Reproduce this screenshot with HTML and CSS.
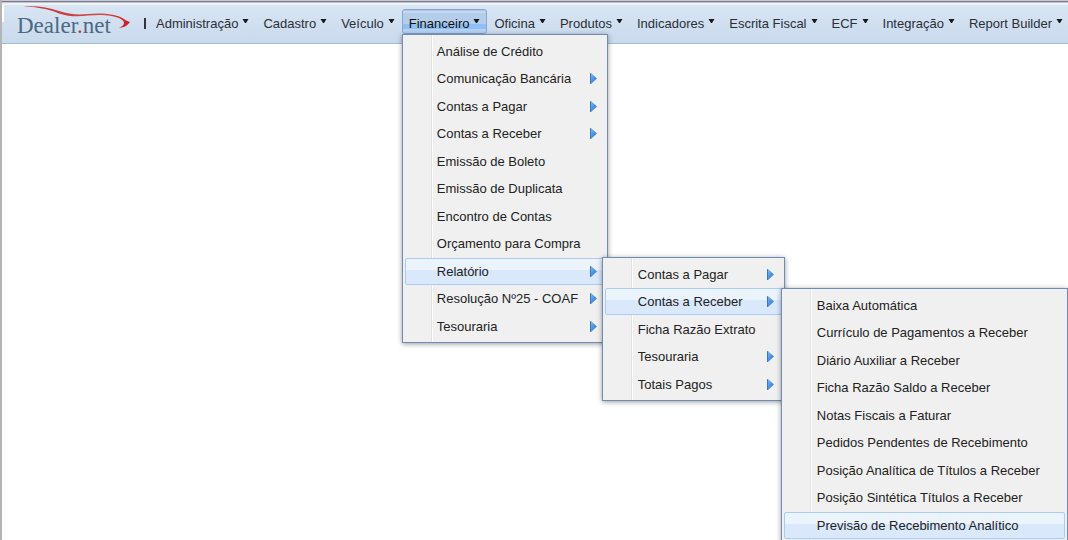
FILE: index.html
```html
<!DOCTYPE html>
<html lang="pt-BR">
<head>
<meta charset="utf-8">
<title>Dealer.net</title>
<link rel="stylesheet" href="styles.css">
</head>
<body>
<svg class="defs" width="0" height="0" aria-hidden="true">
  <defs>
    <linearGradient id="arrow-fill" x1="0" y1="0" x2="1" y2="1">
      <stop offset="0" stop-color="#8cc0f2"/>
      <stop offset="0.5" stop-color="#4f94e0"/>
      <stop offset="1" stop-color="#2f74c8"/>
    </linearGradient>
    <symbol id="arrow" viewBox="0 0 7 11">
      <path d="M0 0 H1 L7 5.500 L1 11 H0 Z" fill="url(#arrow-fill)"/>
      <path d="M0.5 0.3 V10.7" stroke="#3a76c0" stroke-width="1"/>
    </symbol>
    <symbol id="caret" viewBox="0 0 7 4">
      <path d="M0.500 0 H6.500 L4 4 H3 Z" fill="#15181d"/>
    </symbol>
  </defs>
</svg>
<div class="page">
  <header class="bar">
    <a class="brand" href="#" aria-label="Dealer.net">
      <svg width="130" height="36" viewBox="0 0 130 36">
        <defs>
          <linearGradient id="swoosh" x1="0" x2="1" y1="0" y2="0">
            <stop offset="0" stop-color="#d03a3a" stop-opacity="0.5"/>
            <stop offset="0.15" stop-color="#c8383a"/>
            <stop offset="0.75" stop-color="#d04a48"/>
            <stop offset="1" stop-color="#cc1c20"/>
          </linearGradient>
        </defs>
        <text class="brand-text" x="15" y="30">Dealer<tspan class="brand-dot">.</tspan>net</text>
        <path fill="url(#swoosh)" d="M21 3.500 C33 2 46 4.500 57 8 C67 11.200 75 12 86 11 C100 9.600 114 11 121 15.500 C122.500 16.500 123.500 17.300 128 19 C126 22 123 24.300 116.500 25.200 C120 23.500 122 22 122 20 C122 18 120 16.500 117 15 C109 11.600 98 11.400 86 12.600 C76 13.600 67 13.800 57 10.400 C46 6 35 3.800 21 3.500 Z"/>
      </svg>
    </a>
    <nav class="nav" aria-label="Principal">
      <span class="divider"></span>
      <button class="tab">Administração<svg class="caret"><use href="#caret"/></svg></button>
      <button class="tab">Cadastro<svg class="caret"><use href="#caret"/></svg></button>
      <button class="tab">Veículo<svg class="caret"><use href="#caret"/></svg></button>
      <div class="tab-group">
        <button class="tab tab-open" aria-expanded="true">Financeiro<svg class="caret"><use href="#caret"/></svg></button>
        <ul class="menu menu-main">
          <li><button class="item">Análise de Crédito</button></li>
          <li><button class="item">Comunicação Bancária<svg class="arrow"><use href="#arrow"/></svg></button></li>
          <li><button class="item">Contas a Pagar<svg class="arrow"><use href="#arrow"/></svg></button></li>
          <li><button class="item">Contas a Receber<svg class="arrow"><use href="#arrow"/></svg></button></li>
          <li><button class="item">Emissão de Boleto</button></li>
          <li><button class="item">Emissão de Duplicata</button></li>
          <li><button class="item">Encontro de Contas</button></li>
          <li><button class="item">Orçamento para Compra</button></li>
          <li>
            <button class="item item-active" aria-expanded="true">Relatório<svg class="arrow"><use href="#arrow"/></svg></button>
            <ul class="menu menu-sub">
              <li><button class="item">Contas a Pagar<svg class="arrow"><use href="#arrow"/></svg></button></li>
              <li>
                <button class="item item-active" aria-expanded="true">Contas a Receber<svg class="arrow"><use href="#arrow"/></svg></button>
                <ul class="menu menu-sub menu-wide">
                  <li><button class="item">Baixa Automática</button></li>
                  <li><button class="item">Currículo de Pagamentos a Receber</button></li>
                  <li><button class="item">Diário Auxiliar a Receber</button></li>
                  <li><button class="item">Ficha Razão Saldo a Receber</button></li>
                  <li><button class="item">Notas Fiscais a Faturar</button></li>
                  <li><button class="item">Pedidos Pendentes de Recebimento</button></li>
                  <li><button class="item">Posição Analítica de Títulos a Receber</button></li>
                  <li><button class="item">Posição Sintética Títulos a Receber</button></li>
                  <li><button class="item item-active">Previsão de Recebimento Analítico</button></li>
                </ul>
              </li>
              <li><button class="item">Ficha Razão Extrato</button></li>
              <li><button class="item">Tesouraria<svg class="arrow"><use href="#arrow"/></svg></button></li>
              <li><button class="item">Totais Pagos<svg class="arrow"><use href="#arrow"/></svg></button></li>
            </ul>
          </li>
          <li><button class="item">Resolução Nº25 - COAF<svg class="arrow"><use href="#arrow"/></svg></button></li>
          <li><button class="item">Tesouraria<svg class="arrow"><use href="#arrow"/></svg></button></li>
        </ul>
      </div>
      <button class="tab">Oficina<svg class="caret"><use href="#caret"/></svg></button>
      <button class="tab">Produtos<svg class="caret"><use href="#caret"/></svg></button>
      <button class="tab">Indicadores<svg class="caret"><use href="#caret"/></svg></button>
      <button class="tab">Escrita Fiscal<svg class="caret"><use href="#caret"/></svg></button>
      <button class="tab">ECF<svg class="caret"><use href="#caret"/></svg></button>
      <button class="tab">Integração<svg class="caret"><use href="#caret"/></svg></button>
      <button class="tab">Report Builder<svg class="caret"><use href="#caret"/></svg></button>
    </nav>
  </header>
</div>
</body>
</html>
```
FILE: styles.css
```css
* {
  box-sizing: border-box;
}

body {
  margin: 0;
  background: #fff;
  font-family: "Liberation Sans", Arial, sans-serif;
  font-size: 13px;
  line-height: 16px;
  color: #222;
  overflow: hidden;
}

.defs {
  position: absolute;
}

.page {
  min-height: 100vh;
  border-left: 2px solid #b4b4b4;
}

.bar {
  display: flex;
  align-items: flex-start;
  height: 44px;
  border-bottom: 1px solid #a3bcd6;
  background:
    linear-gradient(#c9c9d6 0 1px, #77778f 1px 2px, #c4c4c8 2px 3px, #eef3f8 3px 5px, transparent 5px),
    linear-gradient(#fff, #fff) 0 4px / 2px 18px no-repeat,
    linear-gradient(#dae6f4, #c9daed);
}

.brand {
  display: block;
  flex: none;
  width: 130px;
  padding-top: 3px;
}

.brand svg {
  display: block;
}

.brand-text {
  font-family: "Liberation Serif", "Times New Roman", serif;
  font-size: 23px;
  fill: #4a6a84;
}

.brand-dot {
  fill: #cc2a2e;
}

.nav {
  display: flex;
  padding-top: 9px;
}

.divider {
  width: 2px;
  height: 11px;
  margin: 9px 3px 0 12px;
  background: #2e3540;
}

.tab-group {
  position: relative;
}

.tab {
  display: flex;
  align-items: center;
  gap: 4px;
  height: 25px;
  padding: 4px 6px 0;
  border: 1px solid transparent;
  border-radius: 3px;
  background: none;
  font: inherit;
  color: #2a2f38;
  white-space: nowrap;
}

.tab-open {
  border-color: #86a7d2;
  color: #111;
  background: linear-gradient(#a9c4e4 0 1px, #c8d9ee 1px 3px, #b4cdea 3px 14px, #8fc0f5 14px 19px, #b6d2f2 19px);
}

.caret {
  flex: none;
  width: 7px;
  height: 4px;
  margin-bottom: 5px;
}

.menu {
  position: absolute;
  margin: 0;
  padding: 3px 2px 2px;
  border: 1px solid #718bb7;
  list-style: none;
  background: linear-gradient(90deg, transparent 28px, #e2e2e2 28px 29px, #fff 29px 30px, transparent 30px), #f0f0f0;
  box-shadow: 0 1px 5px rgba(0, 0, 0, 0.4);
}

.menu > li {
  position: relative;
  height: 27px;
}

.menu > li:nth-child(even) {
  height: 28px;
}

.menu-main {
  top: 25px;
  left: 0;
  width: 206px;
}

.menu-sub {
  top: -1px;
  left: 197px;
  width: 183px;
}

.menu-wide {
  top: 0;
  left: 176px;
  width: 287px;
}

.item {
  display: flex;
  align-items: center;
  justify-content: space-between;
  width: 100%;
  height: 27px;
  padding: 0 7px 0 31px;
  border: 1px solid transparent;
  border-radius: 2px;
  background: none;
  font: inherit;
  color: #222;
  white-space: nowrap;
}

.menu-sub .item {
  padding-left: 32px;
}

.item-active {
  border-color: #a9cbf5;
  background: linear-gradient(#ebf3fd 0 11px, #d9e8fb 11px);
}

.arrow {
  flex: none;
  width: 7px;
  height: 11px;
}
```
